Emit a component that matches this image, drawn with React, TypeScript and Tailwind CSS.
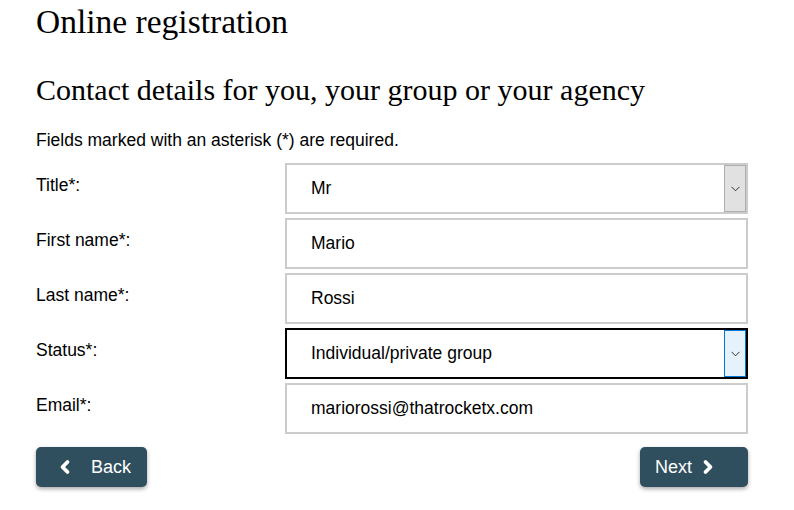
import { ChevronLeft, ChevronRight } from "lucide-react";

const rows = [
  { label: "Title*:", value: "Mr", select: true },
  { label: "First name*:", value: "Mario" },
  { label: "Last name*:", value: "Rossi" },
  { label: "Status*:", value: "Individual/private group", select: true, focused: true },
  { label: "Email*:", value: "mariorossi@thatrocketx.com" },
];

const Caret = () => (
  <svg width="9" height="6" viewBox="0 0 9 6" fill="none">
    <path d="M0.5 0.8 L4.5 4.8 L8.5 0.8" stroke="#333" strokeWidth="1" />
  </svg>
);

const Field = ({ value, select, focused }: { value: string; select?: boolean; focused?: boolean }) => (
  <div
    className={
      focused
        ? "flex h-[51px] w-[463px] items-stretch border-2 border-black bg-white"
        : "flex h-[51px] w-[463px] items-stretch border-2 border-[#cccccc] bg-white"
    }
  >
    <div className="flex flex-1 items-center pl-[24px] text-[17.5px] text-black">{value}</div>
    {select &&
      (focused ? (
        <div className="flex w-[22px] items-center justify-center border border-[#0078d7] bg-[#e5f1fb]">
          <Caret />
        </div>
      ) : (
        <div className="flex w-[22px] items-center justify-center border border-[#adadad] bg-[#e1e1e1]">
          <Caret />
        </div>
      ))}
  </div>
);

export default function App() {
  return (
    <div className="min-h-[510px] bg-white pl-[36px] font-['Liberation_Sans',Arial,sans-serif] text-black">
      <h1 className="pt-[2px] font-['Liberation_Serif',Georgia,serif] text-[33.5px] leading-[40px]">
        Online registration
      </h1>
      <h2 className="mt-[28px] font-['Liberation_Serif',Georgia,serif] text-[30px] leading-[40px]">
        Contact details for you, your group or your agency
      </h2>
      <p className="mt-[20px] text-[17.5px] leading-[20px]">Fields marked with an asterisk (*) are required.</p>

      <div className="mt-[13px] flex flex-col gap-[4px]">
        {rows.map((r) => (
          <div key={r.label} className="flex items-start">
            <div className="w-[249px] pt-[12px] text-[17.5px] leading-[20px]">{r.label}</div>
            <Field value={r.value} select={r.select} focused={r.focused} />
          </div>
        ))}
      </div>

      <div className="mt-[13px] flex w-[712px] justify-between">
        <button className="flex h-[40px] w-[111px] items-center rounded-[5px] bg-[#2f4e5e] pl-[19px] text-[18px] text-white shadow-[0_2px_4px_rgba(0,0,0,0.35)]">
          <ChevronLeft size={20} strokeWidth={4.5} />
          <span className="ml-[16px]">Back</span>
        </button>
        <button className="flex h-[40px] w-[108px] items-center rounded-[5px] bg-[#2f4e5e] pl-[15px] text-[18px] text-white shadow-[0_2px_4px_rgba(0,0,0,0.35)]">
          <span>Next</span>
          <ChevronRight size={20} strokeWidth={4.5} className="ml-[6px]" />
        </button>
      </div>
    </div>
  );
}
